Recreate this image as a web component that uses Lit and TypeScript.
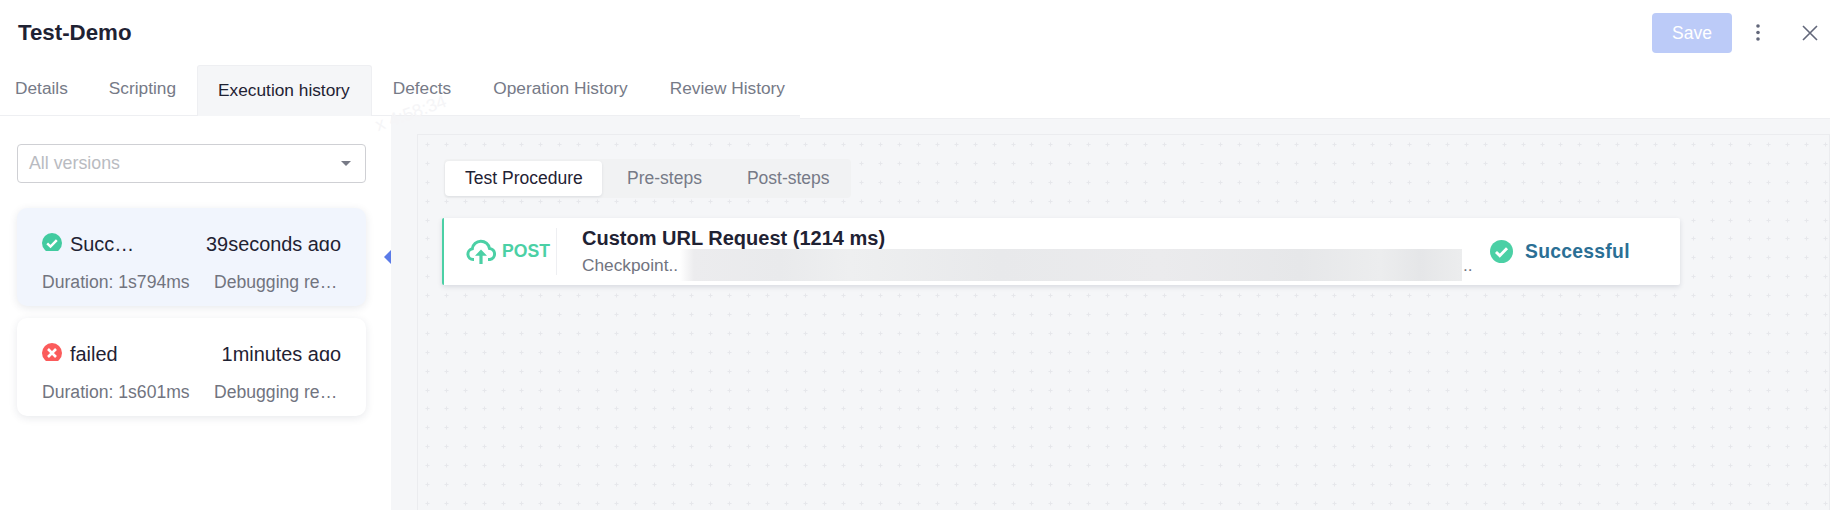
import { LitElement, html, css } from "lit";
import { customElement } from "lit/decorators.js";

const dots = `url("data:image/svg+xml,%3Csvg xmlns='http://www.w3.org/2000/svg' width='18.9' height='18.9'%3E%3Cpath d='M2.5 .5v4M.5 2.5h4' stroke='%23e6e7eb' stroke-width='1'/%3E%3C/svg%3E")`;

const checkIcon = (size: number, fill: string) => html`<svg width=${size} height=${size} viewBox="0 0 20 20">
  <circle cx="10" cy="10" r="10" fill=${fill}></circle>
  <path d="M5.2 10.4l3.3 3.2 6.3-6.4" fill="none" stroke="#fff" stroke-width="2.5"></path>
</svg>`;

const failIcon = html`<svg width="20" height="20" viewBox="0 0 20 20">
  <circle cx="10" cy="10" r="10" fill="#fb5b5b"></circle>
  <path d="M6 6l8 8M14 6l-8 8" fill="none" stroke="#fff" stroke-width="2.6"></path>
</svg>`;

const cloudIcon = html`<svg width="30" height="26" viewBox="0 0 30 26">
  <path d="M8 20.5H7.2a5.4 5.4 0 0 1-.9-10.7 8.7 8.7 0 0 1 17.2-.4 5.6 5.6 0 0 1 .4 11.1H22" fill="none" stroke="#4bd0a5" stroke-width="3"></path>
  <path d="M15 10.5l6 6.2h-4.4V25h-3.2v-8.3H9z" fill="#4bd0a5"></path>
</svg>`;

@customElement("app-root")
export class AppRoot extends LitElement {
  static styles = css`
    :host {
      display: block;
      position: relative;
      height: 510px;
      overflow: hidden;
      background: #fff;
      font-family: "Liberation Sans", Arial, sans-serif;
      color: #1f2233;
    }
    .header {
      display: flex;
      align-items: center;
      justify-content: space-between;
      height: 65px;
      padding: 0 12px 0 18px;
      box-sizing: border-box;
    }
    .title {
      font-size: 22.3px;
      font-weight: 700;
    }
    .actions {
      display: flex;
      align-items: center;
    }
    .save {
      width: 80px;
      height: 40px;
      border-radius: 4px;
      background: #bccbf8;
      color: #fff;
      font-size: 17.5px;
      line-height: 40px;
      text-align: center;
    }
    .more {
      display: flex;
      margin-left: 24px;
    }
    .close {
      display: flex;
      margin-left: 42px;
    }
    .tabs {
      display: flex;
      width: 800px;
      height: 51px;
      box-sizing: border-box;
      border-bottom: 1px solid #eeeff2;
      font-size: 17.3px;
      color: #767a87;
      white-space: nowrap;
    }
    .tab {
      padding: 11px 21px 0;
      line-height: 24px;
    }
    .tab.first {
      padding-left: 15px;
      padding-right: 20px;
    }
    .tab.active {
      height: 51px;
      box-sizing: border-box;
      padding: 12px 21px 0 20px;
      background: #f5f6f8;
      border: 1px solid #eeeff2;
      border-bottom: none;
      border-radius: 3px 3px 0 0;
      color: #1f2233;
      margin: 0 0 -1px;
    }
    .main {
      display: flex;
      height: 394px;
    }
    .side {
      width: 391px;
      flex: none;
      box-sizing: border-box;
      padding: 28px 25px 0 17px;
    }
    .select {
      display: flex;
      align-items: center;
      justify-content: space-between;
      height: 39px;
      box-sizing: border-box;
      padding: 0 14px 0 11px;
      border: 1px solid #cfd0d4;
      border-radius: 4px;
      font-size: 17.8px;
      color: #b9bbc1;
    }
    .caret {
      width: 0;
      height: 0;
      border-left: 5px solid transparent;
      border-right: 5px solid transparent;
      border-top: 5px solid #777a86;
    }
    .cards {
      display: flex;
      flex-direction: column;
      gap: 12px;
      margin-top: 25px;
    }
    .card {
      height: 98px;
      box-sizing: border-box;
      padding: 24px 25px 0;
      border-radius: 10px;
      background: #fff;
      box-shadow: 0 2px 8px rgba(30, 40, 70, 0.1);
    }
    .card.current {
      background: #f1f5fd;
    }
    .row1 {
      display: flex;
      justify-content: space-between;
      height: 19px;
      overflow: hidden;
      font-size: 19.9px;
      line-height: 24px;
    }
    .status {
      display: flex;
      gap: 8px;
      align-items: flex-start;
    }
    .status svg {
      flex: none;
      margin-top: 1px;
    }
    .row2 {
      display: flex;
      justify-content: space-between;
      margin-top: 19px;
      font-size: 17.6px;
      line-height: 24px;
      color: #71747f;
    }
    .row2 .dbg {
      width: 127px;
      overflow: hidden;
      white-space: nowrap;
      text-overflow: ellipsis;
    }
    .pane {
      position: relative;
      flex: 1;
      display: flex;
      flex-direction: column;
      background: #f5f6f8;
    }
    .pane-top {
      display: flex;
      height: 3px;
      flex: none;
    }
    .pane-top div {
      flex: 1;
      margin-left: 409px;
      background: #fff;
      border-bottom: 1px solid #eeeff2;
    }
    .arrow {
      position: absolute;
      left: -7px;
      top: 134px;
      width: 0;
      height: 0;
      border-top: 7.5px solid transparent;
      border-bottom: 7.5px solid transparent;
      border-right: 7px solid #5b7be8;
    }
    .canvas {
      flex: 1;
      margin: 15px 0 0 26px;
      padding: 24px 0 0 24px;
      border: 1px solid #ebecef;
      border-bottom: none;
      background-image: ${css([dots] as unknown as TemplateStringsArray)};
      background-position: 7px 7px;
    }
    .sub-tabs {
      display: inline-flex;
      height: 39px;
      box-sizing: border-box;
      width: 407px;
      margin-left: 2px;
      padding: 2px 0 0 1px;
      border-radius: 4px;
      background: #f1f2f3;
      font-size: 17.5px;
      color: #767a87;
      white-space: nowrap;
    }
    .sub-tab {
      height: 35px;
      line-height: 34px;
      padding: 0 20px;
    }
    .sub-tab.active {
      width: 157px;
      box-sizing: border-box;
      border-radius: 4px;
      background: #fff;
      color: #1f2233;
      box-shadow: 0 1px 3px rgba(30, 40, 70, 0.1);
    }
    .sub-tab.pre {
      margin-left: 5px;
    }
    .sub-tab.post {
      margin-left: 5px;
    }
    .step {
      display: flex;
      align-items: center;
      width: 1238px;
      height: 67px;
      box-sizing: border-box;
      margin-top: 20px;
      border-left: 2px solid #4bd0a5;
      border-radius: 2px;
      background: #fff;
      box-shadow: 0 2px 5px rgba(30, 40, 70, 0.13);
    }
    .method {
      display: flex;
      flex: none;
      align-items: center;
      gap: 6px;
      width: 113px;
      height: 47px;
      box-sizing: border-box;
      padding-left: 22px;
      border-right: 1px solid #eeeff2;
      color: #4bd0a5;
      font-size: 17.6px;
      font-weight: 700;
    }
    .method svg {
      flex: none;
    }
    .info {
      flex: 1;
      min-width: 0;
      margin-left: 25px;
    }
    .name {
      font-size: 20px;
      font-weight: 700;
      line-height: 22px;
      margin-top: -1px;
      white-space: nowrap;
    }
    .check {
      position: relative;
      font-size: 17.3px;
      line-height: 22px;
      margin-top: 5px;
      color: #71747f;
    }
    .blur {
      position: absolute;
      left: 98px;
      top: -5px;
      width: 782px;
      height: 32px;
      background: linear-gradient(90deg, #fff 0, #ececee 14px, #e9eaec 100px, #eeeff0 170px, #e8e9eb 320px, #ebebed 480px, #e6e7e9 620px, #ecedee 700px, #e5e6e8 740px, #ecedee 782px);
    }
    .dots {
      position: absolute;
      left: 881px;
      top: 0;
    }
    .result {
      display: flex;
      align-items: center;
      gap: 12px;
      width: 190px;
      flex: none;
      font-size: 19.3px;
      font-weight: 700;
      color: #2b6f95;
      box-sizing: border-box;
      letter-spacing: 0.3px;
    }
    .result svg {
      flex: none;
    }
    .watermark {
      position: absolute;
      left: 374px;
      top: 103px;
      font-size: 18px;
      color: #f5f5f7;
      transform: rotate(-20deg);
      white-space: nowrap;
    }
  `;

  render() {
    return html`
      <div class="header">
        <div class="title">Test-Demo</div>
        <div class="actions">
          <div class="save">Save</div>
          <div class="more">
            <svg width="4" height="17" viewBox="0 0 4 17" fill="#62677a">
              <circle cx="2" cy="2" r="1.8"></circle>
              <circle cx="2" cy="8.5" r="1.8"></circle>
              <circle cx="2" cy="15" r="1.8"></circle>
            </svg>
          </div>
          <div class="close">
            <svg width="16" height="16" viewBox="0 0 16 16">
              <path d="M1 1l14 14M15 1L1 15" fill="none" stroke="#62677a" stroke-width="1.6"></path>
            </svg>
          </div>
        </div>
      </div>
      <div class="tabs">
        <div class="tab first">Details</div>
        <div class="tab">Scripting</div>
        <div class="tab active">Execution history</div>
        <div class="tab">Defects</div>
        <div class="tab">Operation History</div>
        <div class="tab">Review History</div>
      </div>
      <div class="main">
        <div class="side">
          <div class="select"><span>All versions</span><span class="caret"></span></div>
          <div class="cards">
            <div class="card current">
              <div class="row1">
                <div class="status">${checkIcon(20, "#42cba0")}<span>Succ…</span></div>
                <div>39seconds ago</div>
              </div>
              <div class="row2"><div>Duration: 1s794ms</div><div class="dbg">Debugging records</div></div>
            </div>
            <div class="card">
              <div class="row1">
                <div class="status">${failIcon}<span>failed</span></div>
                <div>1minutes ago</div>
              </div>
              <div class="row2"><div>Duration: 1s601ms</div><div class="dbg">Debugging records</div></div>
            </div>
          </div>
        </div>
        <div class="pane">
          <div class="arrow"></div>
          <div class="pane-top"><div></div></div>
          <div class="canvas">
            <div class="sub-tabs">
              <div class="sub-tab active">Test Procedure</div>
              <div class="sub-tab pre">Pre-steps</div>
              <div class="sub-tab post">Post-steps</div>
            </div>
            <div class="step">
              <div class="method">${cloudIcon}<span>POST</span></div>
              <div class="info">
                <div class="name">Custom URL Request (1214 ms)</div>
                <div class="check">
                  Checkpoint..
                  <div class="blur"></div>
                  <div class="dots">..</div>
                </div>
              </div>
              <div class="result">${checkIcon(23, "#4bd0a5")}<span>Successful</span></div>
            </div>
          </div>
        </div>
      </div>
      <div class="watermark">x 4:58:34</div>
    `;
  }
}
